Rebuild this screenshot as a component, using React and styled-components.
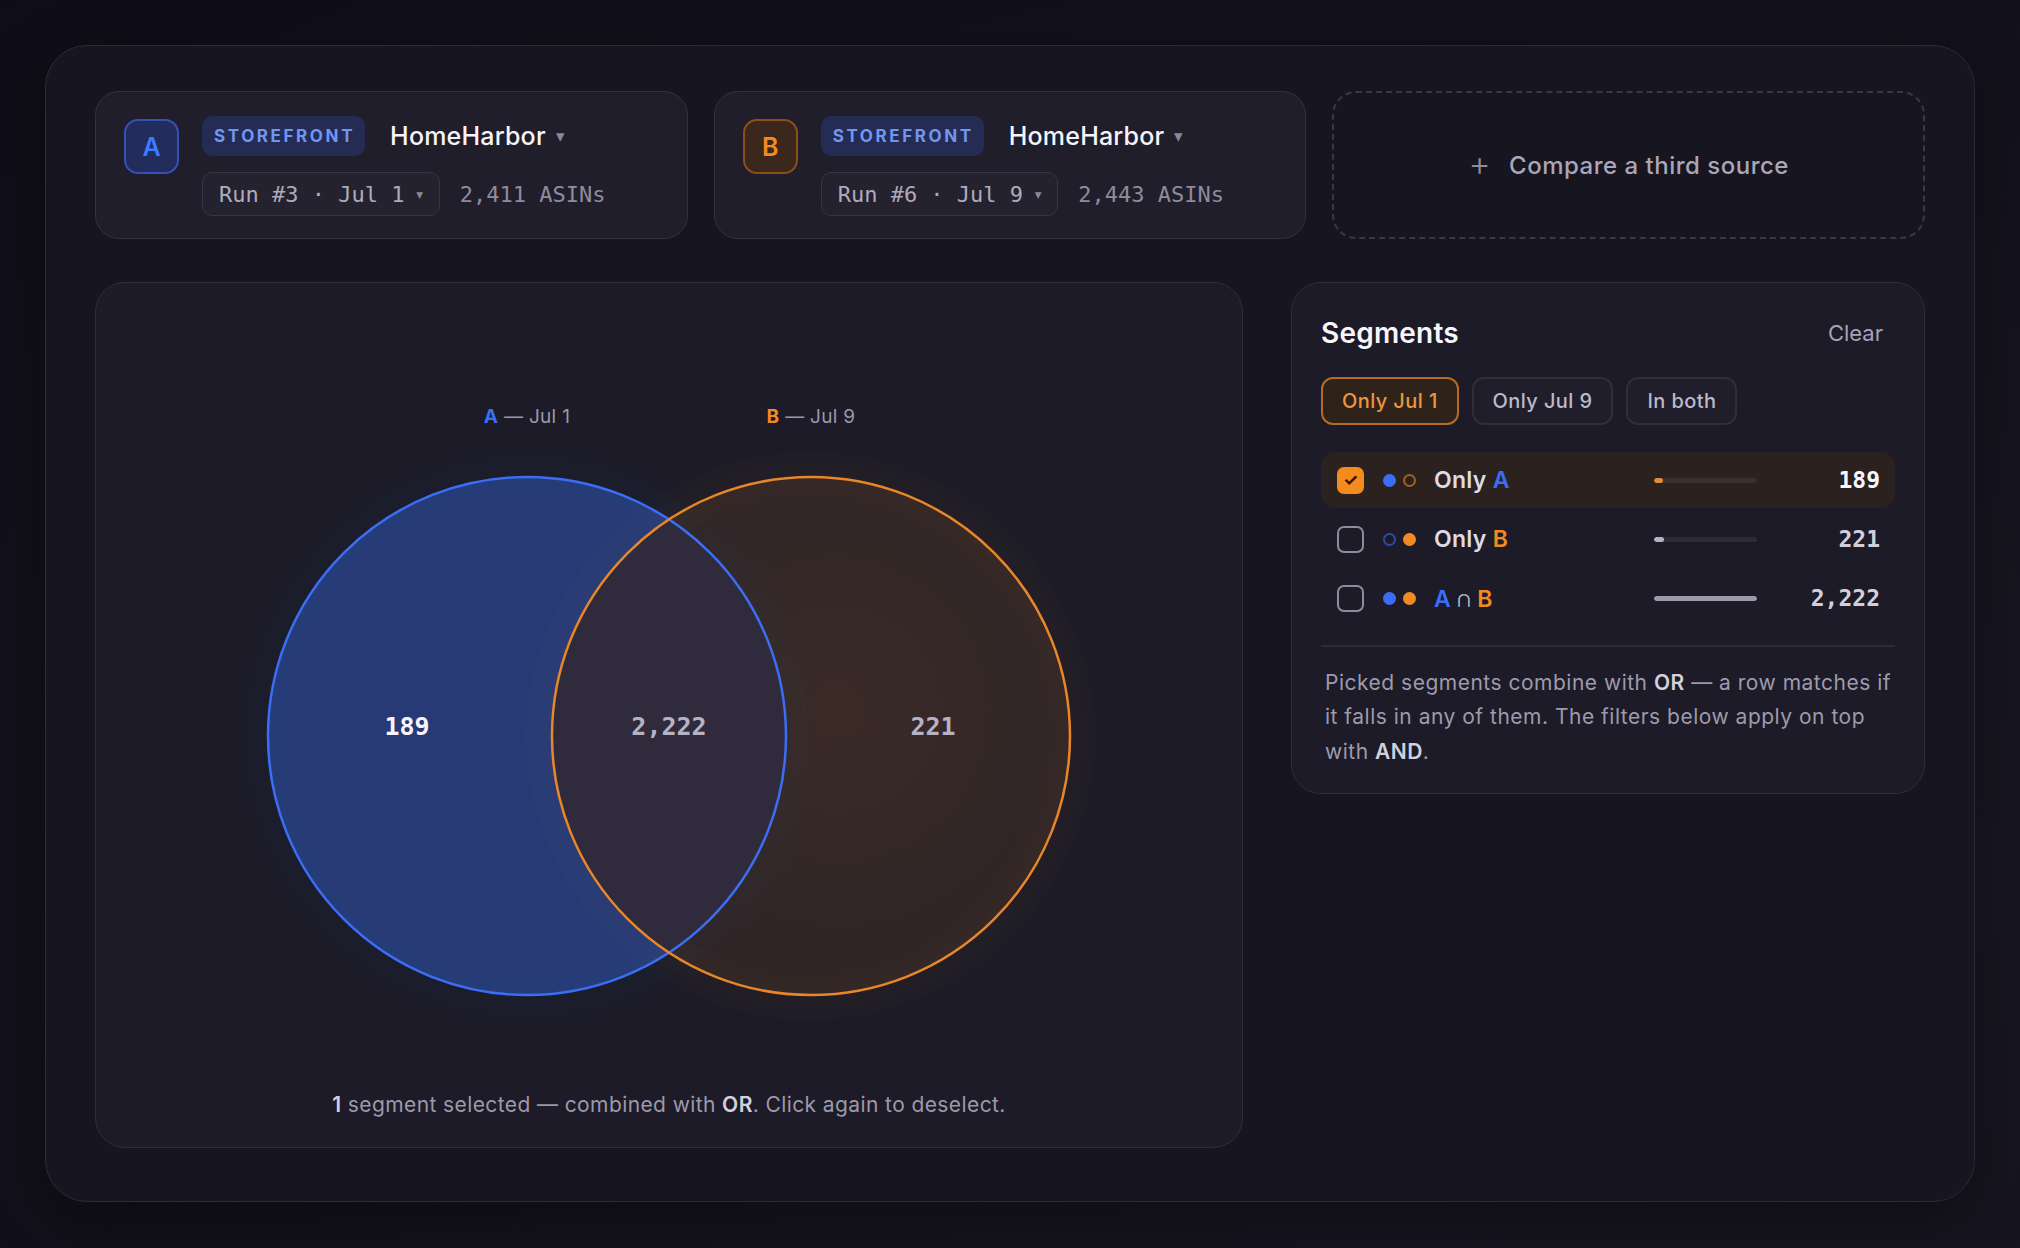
import styled, { createGlobalStyle } from "styled-components";

const GlobalStyle = createGlobalStyle`
  html, body {
    margin: 0;
    padding: 0;
  }
  body {
    background: radial-gradient(ellipse at 85% 70%, #191722 0%, #15141e 45%, #0f0e18 100%);
    min-height: 1248px;
    font-family: "Inter", "Lato", sans-serif;
    color: #e8e6ef;
  }
`;

const BLUE = "#3b6ef5";
const ORANGE = "#f28a22";

const sources = [
  { key: "A", tone: "blue", run: "Run #3 · Jul 1", asins: "2,411 ASINs" },
  { key: "B", tone: "orange", run: "Run #6 · Jul 9", asins: "2,443 ASINs" },
];

const segments = [
  { id: "a", label: "Only", a: "filled", b: "ring", count: 189, checked: true },
  { id: "b", label: "Only", a: "ring", b: "filled", count: 221, checked: false },
  { id: "ab", label: null, a: "filled", b: "filled", count: 2222, checked: false },
];

const MAX = 2222;

function App() {
  return (
    <>
      <GlobalStyle />
      <Shell>
        <SourceRow>
          {sources.map((s) => (
            <SourceCard key={s.key}>
              <Badge $tone={s.tone}>{s.key}</Badge>
              <SourceInfo>
                <SourceLine $gap={25}>
                  <Tag>STOREFRONT</Tag>
                  <StoreName>
                    HomeHarbor <Caret>▾</Caret>
                  </StoreName>
                </SourceLine>
                <SourceLine $gap={20}>
                  <RunSelect>
                    {s.run} <Caret>▾</Caret>
                  </RunSelect>
                  <Asins>{s.asins}</Asins>
                </SourceLine>
              </SourceInfo>
            </SourceCard>
          ))}
          <AddSource>
            <Plus>+</Plus>
            Compare a third source
          </AddSource>
        </SourceRow>

        <MainRow>
          <VennPanel>
            <VennSvg width="820" height="630" viewBox="0 0 820 630">
              <defs>
                <clipPath id="clipA">
                  <circle cx="268" cy="353" r="259" />
                </clipPath>
                <radialGradient id="gradB" cx="0.55" cy="0.45" r="0.6">
                  <stop offset="0%" stopColor={ORANGE} stopOpacity="0.14" />
                  <stop offset="100%" stopColor={ORANGE} stopOpacity="0.08" />
                </radialGradient>
                <filter id="glow" x="-20%" y="-20%" width="140%" height="140%">
                  <feGaussianBlur stdDeviation="14" />
                </filter>
              </defs>
              <circle cx="552" cy="353" r="262" fill="none" stroke={ORANGE} strokeOpacity="0.08" strokeWidth="14" filter="url(#glow)" />
              <circle cx="268" cy="353" r="262" fill="none" stroke={BLUE} strokeOpacity="0.07" strokeWidth="14" filter="url(#glow)" />
              <circle cx="268" cy="353" r="259" fill={BLUE} fillOpacity="0.38" />
              <circle cx="552" cy="353" r="259" fill="url(#gradB)" />
              <circle cx="552" cy="353" r="259" fill="#302a3d" clipPath="url(#clipA)" />
              <circle cx="268" cy="353" r="259" fill="none" stroke={BLUE} strokeWidth="2.5" />
              <circle cx="552" cy="353" r="259" fill="none" stroke="#e8862a" strokeWidth="2.5" />

              <VennLabel x="268" y="40" textAnchor="middle">
                <tspan fill={BLUE} fontWeight="700">A</tspan>
                <tspan fill="#9c98aa"> — Jul 1</tspan>
              </VennLabel>
              <VennLabel x="552" y="40" textAnchor="middle">
                <tspan fill={ORANGE} fontWeight="700">B</tspan>
                <tspan fill="#9c98aa"> — Jul 9</tspan>
              </VennLabel>

              <VennCount x="148" y="352" textAnchor="middle" fill="#f7f5fb">189</VennCount>
              <VennCount x="410" y="352" textAnchor="middle" fill="#b6b2c3">2,222</VennCount>
              <VennCount x="674" y="352" textAnchor="middle" fill="#b6b2c3">221</VennCount>
            </VennSvg>
            <VennNote>
              <strong>1</strong> segment selected — combined with <strong>OR</strong>. Click again to deselect.
            </VennNote>
          </VennPanel>

          <SegmentsPanel>
            <PanelHead>
              <PanelTitle>Segments</PanelTitle>
              <ClearButton>Clear</ClearButton>
            </PanelHead>
            <Chips>
              <Chip $active>Only Jul 1</Chip>
              <Chip>Only Jul 9</Chip>
              <Chip>In both</Chip>
            </Chips>
            <SegmentList>
              {segments.map((seg) => (
                <SegmentRow key={seg.id} $active={seg.checked}>
                  <Check $checked={seg.checked}>{seg.checked ? "✓" : ""}</Check>
                  <Dots>
                    <Dot $color={BLUE} $kind={seg.a} $dim="#3148a6" />
                    <Dot $color={ORANGE} $kind={seg.b} $dim="#a3601f" />
                  </Dots>
                  <SegLabel>
                    {seg.id === "ab" ? (
                      <>
                        <Letter $color={BLUE}>A</Letter> <Cap>∩</Cap> <Letter $color={ORANGE}>B</Letter>
                      </>
                    ) : (
                      <>
                        {seg.label} <Letter $color={seg.id === "a" ? BLUE : ORANGE}>{seg.id.toUpperCase()}</Letter>
                      </>
                    )}
                  </SegLabel>
                  <Track $active={seg.checked}>
                    <Fill
                      $color={seg.checked ? "#e38b36" : seg.id === "ab" ? "#9d9aab" : "#b4b1c0"}
                      style={{ width: `${Math.max(8, (seg.count / MAX) * 100)}%` }}
                    />
                  </Track>
                  <Count $active={seg.checked}>{seg.count.toLocaleString("en-US")}</Count>
                </SegmentRow>
              ))}
            </SegmentList>
            <Divider />
            <Help>
              Picked segments combine with <strong>OR</strong> — a row matches if it falls in any of them. The filters
              below apply on top with <strong>AND</strong>.
            </Help>
          </SegmentsPanel>
        </MainRow>
      </Shell>
    </>
  );
}

const Shell = styled.div`
  margin: 45px;
  height: 1157px;
  box-sizing: border-box;
  padding: 45px 49px 0 49px;
  border-radius: 42px;
  background: #17151f;
  border: 1.5px solid #2c2a36;
  box-shadow: 0 20px 60px rgba(0, 0, 0, 0.35);
`;

const SourceRow = styled.div`
  display: grid;
  grid-template-columns: repeat(3, 1fr);
  gap: 26px;
`;

const SourceCard = styled.div`
  height: 148px;
  box-sizing: border-box;
  display: flex;
  align-items: flex-start;
  gap: 23px;
  padding: 24px 28px;
  border-radius: 24px;
  background: #201e2a;
  border: 1.5px solid #34323f;
`;

const Badge = styled.div`
  width: 55px;
  height: 55px;
  margin-top: 3px;
  box-sizing: border-box;
  flex: none;
  display: flex;
  align-items: center;
  justify-content: center;
  border-radius: 14px;
  font-size: 25px;
  font-weight: 600;
  background: ${(p) => (p.$tone === "blue" ? "#222d5e" : "#3b271b")};
  border: 2px solid ${(p) => (p.$tone === "blue" ? "#3451b8" : "#8a4f1f")};
  color: ${(p) => (p.$tone === "blue" ? "#3f7bff" : "#f58a1f")};
`;

const SourceInfo = styled.div`
  display: flex;
  flex-direction: column;
  gap: 16px;
`;

const SourceLine = styled.div`
  display: flex;
  align-items: center;
  gap: ${(p) => p.$gap}px;
`;

const Tag = styled.span`
  height: 40px;
  display: inline-flex;
  align-items: center;
  padding: 0 10px 0 12px;
  border-radius: 10px;
  background: #242c54;
  color: #7196f2;
  font-size: 17px;
  font-weight: 700;
  letter-spacing: 2.6px;
`;

const StoreName = styled.span`
  font-size: 25px;
  font-weight: 500;
  letter-spacing: 0.2px;
  color: #f6f4fa;
  display: inline-flex;
  align-items: center;
  gap: 4px;
`;

const Caret = styled.span`
  font-size: 17px;
  color: #8a8797;
  margin-left: 6px;
`;

const RunSelect = styled.span`
  height: 44px;
  box-sizing: border-box;
  display: inline-flex;
  align-items: center;
  gap: 4px;
  padding: 0 14px 0 16px;
  border-radius: 10px;
  background: #24222e;
  border: 1.5px solid #383644;
  font-family: "DejaVu Sans Mono", monospace;
  font-size: 22px;
  color: #aeaabb;
`;

const Asins = styled.span`
  font-family: "DejaVu Sans Mono", monospace;
  font-size: 22px;
  color: #8f8b9d;
`;

const AddSource = styled.div`
  height: 148px;
  box-sizing: border-box;
  display: flex;
  align-items: center;
  justify-content: center;
  gap: 18px;
  border-radius: 24px;
  border: 2px dashed #3a3846;
  color: #aaa6b9;
  font-size: 24px;
  font-weight: 500;
  letter-spacing: 0.5px;
`;

const Plus = styled.span`
  font-size: 34px;
  font-weight: 300;
  color: #8f8b9d;
  margin-top: -4px;
`;

const MainRow = styled.div`
  display: grid;
  grid-template-columns: 1148px 1fr;
  gap: 48px;
  align-items: start;
  margin-top: 43px;
`;

const VennPanel = styled.div`
  height: 866px;
  box-sizing: border-box;
  display: flex;
  flex-direction: column;
  align-items: center;
  padding-top: 100px;
  border-radius: 30px;
  background: #1c1b27;
  border: 1.5px solid #302e3b;
`;

const VennSvg = styled.svg`
  display: block;
  overflow: visible;
`;

const VennLabel = styled.text`
  font-family: "Inter", sans-serif;
  font-size: 19px;
  letter-spacing: 0.3px;
`;

const VennCount = styled.text`
  font-family: "DejaVu Sans Mono", monospace;
  font-size: 25px;
  font-weight: 700;
`;

const VennNote = styled.p`
  margin: 78px 0 0;
  font-size: 21px;
  line-height: 28px;
  letter-spacing: 0.4px;
  color: #9d99ab;

  strong {
    color: #d3d0dc;
    font-weight: 600;
  }
`;

const SegmentsPanel = styled.div`
  box-sizing: border-box;
  padding: 30px 29px 24px 29px;
  border-radius: 30px;
  background: #1c1b27;
  border: 1.5px solid #302e3b;
`;

const PanelHead = styled.div`
  display: flex;
  align-items: center;
  justify-content: space-between;
  height: 40px;
  padding-right: 12px;
`;

const PanelTitle = styled.h2`
  margin: 0;
  font-size: 28px;
  font-weight: 600;
  letter-spacing: 0.2px;
  color: #f8f6fb;
`;

const ClearButton = styled.span`
  font-size: 22px;
  color: #a6a2b4;
`;

const Chips = styled.div`
  display: flex;
  gap: 13px;
  margin-top: 24px;
`;

const Chip = styled.span`
  height: 48px;
  box-sizing: border-box;
  display: inline-flex;
  align-items: center;
  padding: 0 19px;
  border-radius: 12px;
  font-size: 20px;
  font-weight: 500;
  letter-spacing: 0.4px;
  background: ${(p) => (p.$active ? "#2f2219" : "#1f1e2a")};
  border: 2px solid ${(p) => (p.$active ? "#b76a22" : "#302e3b")};
  color: ${(p) => (p.$active ? "#ec9540" : "#bdb9c9")};
`;

const SegmentList = styled.div`
  display: flex;
  flex-direction: column;
  gap: 3px;
  margin-top: 27px;
`;

const SegmentRow = styled.div`
  height: 56px;
  display: flex;
  align-items: center;
  padding: 0 15px 0 16px;
  border-radius: 14px;
  background: ${(p) => (p.$active ? "#2b211f" : "transparent")};
`;

const Check = styled.span`
  width: 27px;
  height: 27px;
  box-sizing: border-box;
  flex: none;
  display: flex;
  align-items: center;
  justify-content: center;
  border-radius: 7px;
  font-size: 17px;
  font-weight: 700;
  color: #2a1708;
  background: ${(p) => (p.$checked ? "#f58a1f" : "transparent")};
  border: 2px solid ${(p) => (p.$checked ? "#f58a1f" : "#8e8b9b")};
`;

const Dots = styled.span`
  display: flex;
  gap: 7px;
  margin: 0 18px 0 19px;
`;

const Dot = styled.span`
  width: 13px;
  height: 13px;
  box-sizing: border-box;
  border-radius: 50%;
  background: ${(p) => (p.$kind === "filled" ? p.$color : "transparent")};
  border: 2px solid ${(p) => (p.$kind === "filled" ? p.$color : p.$dim)};
`;

const SegLabel = styled.span`
  flex: 1;
  font-size: 23px;
  font-weight: 600;
  letter-spacing: 0.3px;
  color: #dedbe7;
`;

const Letter = styled.span`
  color: ${(p) => p.$color};
`;

const Cap = styled.span`
  color: #c9c6d3;
  font-weight: 400;
`;

const Track = styled.span`
  width: 103px;
  height: 5px;
  border-radius: 3px;
  background: ${(p) => (p.$active ? "#3a2f2d" : "#2d2b37")};
  overflow: hidden;
`;

const Fill = styled.span`
  display: block;
  height: 100%;
  border-radius: 3px;
  background: ${(p) => p.$color};
`;

const Count = styled.span`
  width: 123px;
  text-align: right;
  font-family: "DejaVu Sans Mono", monospace;
  font-size: 23px;
  font-weight: 700;
  color: ${(p) => (p.$active ? "#f8f6fb" : "#d2cfdb")};
`;

const Divider = styled.hr`
  margin: 19px 0 0;
  border: none;
  height: 1.5px;
  background: #2d2b38;
`;

const Help = styled.p`
  margin: 19px 0 0 4px;
  font-size: 21px;
  line-height: 34.5px;
  letter-spacing: 0.5px;
  color: #9e9aac;

  strong {
    color: #d3d0dc;
    font-weight: 600;
  }
`;

export default App;
